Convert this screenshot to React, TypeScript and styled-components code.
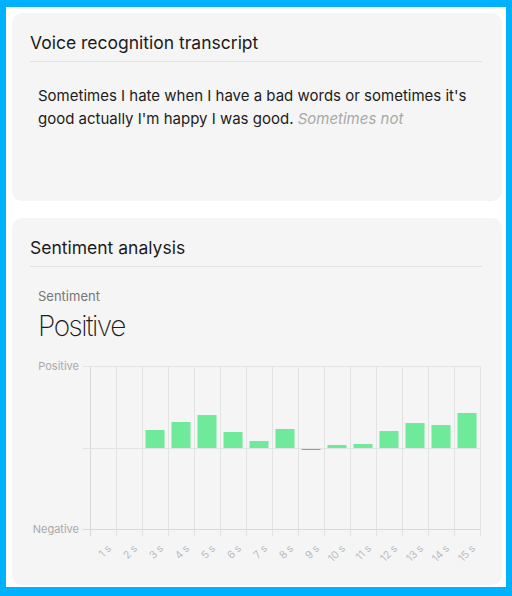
import React from 'react'
import styled, { createGlobalStyle } from 'styled-components'

const GlobalStyle = createGlobalStyle`
  body {
    margin: 0;
    background: #00b1fe;
    font-family: Inter, "Liberation Sans", Arial, sans-serif;
    color: #1c1c1c;
  }
`

const Frame = styled.div`
  margin: 7px 6px 0 6px;
  height: 580px;
  box-sizing: border-box;
  background: #ffffff;
  padding: 6px 4px 2px 6px;
  display: flex;
  flex-direction: column;
  gap: 17px;
`

const Card = styled.section<{ $height: number }>`
  height: ${p => p.$height}px;
  box-sizing: border-box;
  background: #f5f5f5;
  border-radius: 10px;
  padding: 19px 20px 0 18px;
`

const CardTitle = styled.h2`
  margin: 0;
  font-size: 17.5px;
  line-height: 22px;
  font-weight: 400;
  padding-bottom: 7px;
  border-bottom: 1px solid #e2e2e2;
`

const Transcript = styled.p`
  margin: 22px 0 0 8px;
  font-size: 15px;
  line-height: 23px;
  color: #1c1c1c;
`

const Pending = styled.span`
  color: #a9a9a9;
  font-style: italic;
`

const Metric = styled.div`
  margin: 21px 0 0 8px;
`

const MetricLabel = styled.div`
  font-size: 13px;
  line-height: 16px;
  color: #777;
`

const MetricValue = styled.div`
  margin-top: 5px;
  font-weight: 250;
  font-size: 28px;
  letter-spacing: -1.5px;
  line-height: 34px;
  color: #1c1c1c;
`

const ChartSvg = styled.svg`
  display: block;
  margin-top: 14px;
  overflow: visible;
  font-family: Inter, "Liberation Sans", sans-serif;
`

// values in px above (+) or below (-) the zero line
const scores = [0, 0, 18, 26, 33, 16, 7, 19, -2, 3, 4, 17, 25, 23, 35]

const PLOT_LEFT = 60
const COL = 26
const TOP = 9
const ZERO = 91
const BOTTOM = 172

const SentimentChart = () => {
  const right = PLOT_LEFT + COL * scores.length
  return (
    <ChartSvg width={470} height={210}>
      {/* vertical grid */}
      {scores.map((_, i) => (
        <line key={'g' + i} x1={PLOT_LEFT + COL * (i + 1) + 0.5} x2={PLOT_LEFT + COL * (i + 1) + 0.5}
          y1={TOP} y2={BOTTOM + 7} stroke="#e3e3e3" />
      ))}
      <line x1={PLOT_LEFT + 0.5} x2={PLOT_LEFT + 0.5} y1={TOP} y2={BOTTOM + 7} stroke="#d8d8d8" />
      <line x1={53} x2={right} y1={TOP + 0.5} y2={TOP + 0.5} stroke="#e3e3e3" />
      <line x1={53} x2={right} y1={BOTTOM + 0.5} y2={BOTTOM + 0.5} stroke="#d8d8d8" />
      {scores.map((v, i) => {
        const x = PLOT_LEFT + COL * i + 3.5
        if (v === 0) return null
        return v > 0
          ? <rect key={'b' + i} x={x} y={ZERO - v} width={19} height={v} fill="#6eea9a" />
          : <rect key={'b' + i} x={x} y={ZERO} width={19} height={-v} fill="#9a9a9a" />
      })}
      <line x1={53} x2={right} y1={ZERO + 0.5} y2={ZERO + 0.5} stroke="#e3e3e3" />
      <text x={49} y={TOP + 4} textAnchor="end" fontSize={11} fill="#a8a8a8">Positive</text>
      <text x={49} y={BOTTOM + 4} textAnchor="end" fontSize={11} fill="#a8a8a8">Negative</text>
      {scores.map((_, i) => {
        const x = PLOT_LEFT + COL * i + 22
        const y = BOTTOM + 20
        return (
          <text key={'l' + i} x={x} y={y} textAnchor="end" fontSize={10.5} fill="#bcbcbc"
            transform={`rotate(-45 ${x} ${y})`}>{i + 1} s</text>
        )
      })}
    </ChartSvg>
  )
}

export default function App() {
  return (
    <>
      <GlobalStyle />
      <Frame>
        <Card $height={188}>
          <CardTitle>Voice recognition transcript</CardTitle>
          <Transcript>
            Sometimes I hate when I have a bad words or sometimes it's good actually I'm happy I was good.{' '}
            <Pending>Sometimes not</Pending>
          </Transcript>
        </Card>
        <Card $height={367}>
          <CardTitle>Sentiment analysis</CardTitle>
          <Metric>
            <MetricLabel>Sentiment</MetricLabel>
            <MetricValue>Positive</MetricValue>
          </Metric>
          <SentimentChart />
        </Card>
      </Frame>
    </>
  )
}
